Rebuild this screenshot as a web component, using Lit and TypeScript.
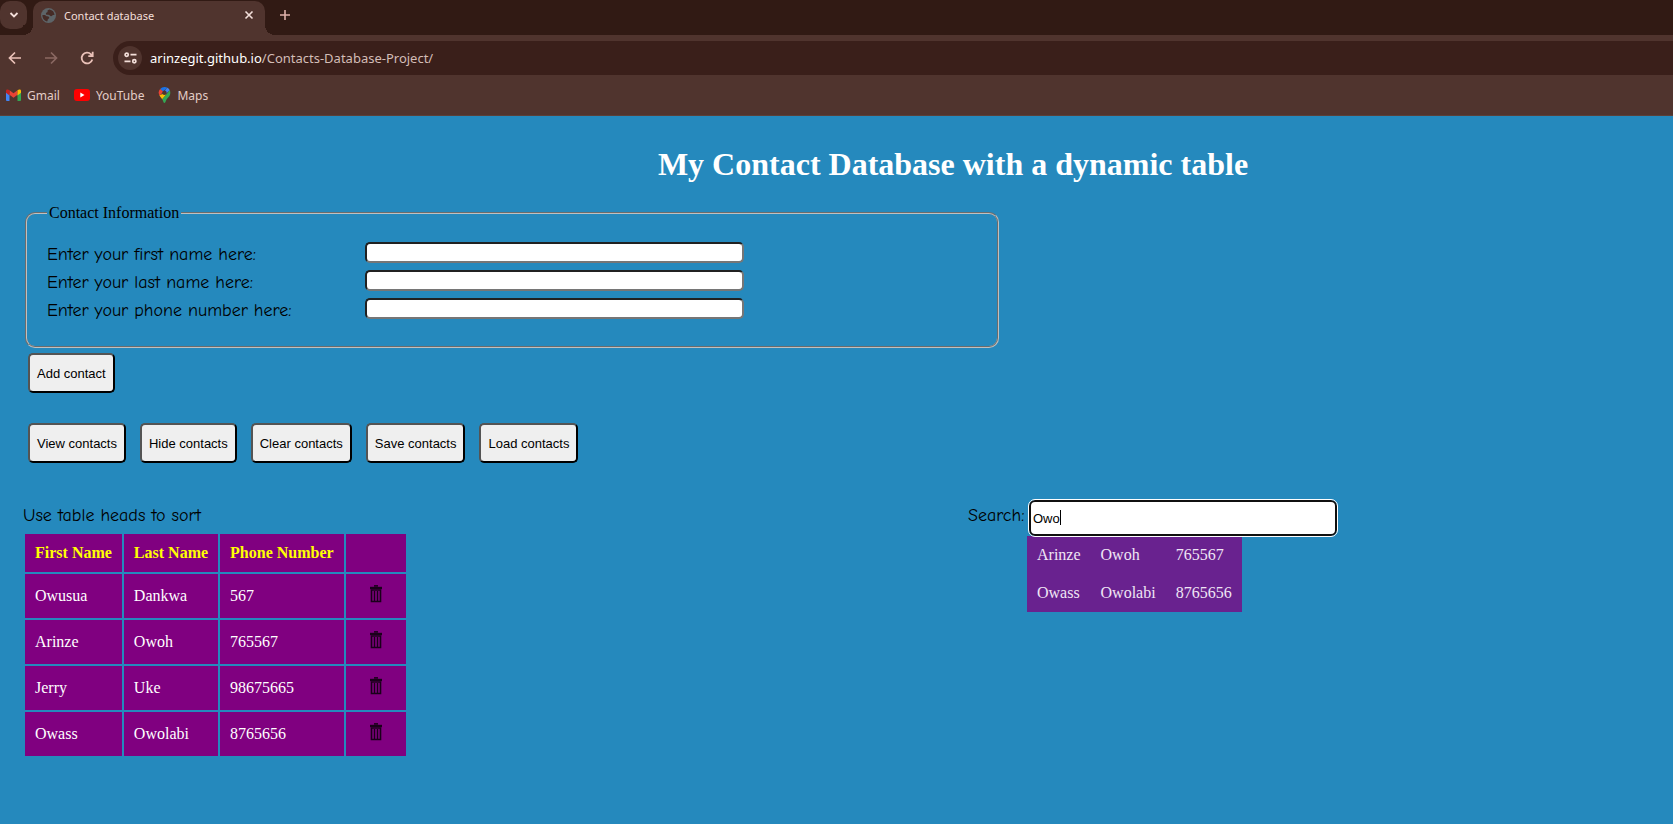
import { LitElement, html, css, svg } from "lit";
import { customElement, state } from "lit/decorators.js";

interface Contact {
  first: string;
  last: string;
  phone: string;
}

@customElement("browser-chrome")
export class BrowserChrome extends LitElement {
  static styles = css`
    :host {
      display: block;
      background: #50342e;
      color: #f3dfda;
      font-family: "Segoe UI", "Noto Sans", "Open Sans", sans-serif;
      font-size: 12px;
      border-bottom: 1px solid #5b4039;
    }
    button {
      border: 0;
      padding: 0;
      background: none;
      color: inherit;
      display: flex;
      align-items: center;
      justify-content: center;
    }
    svg {
      display: block;
      flex: none;
    }
    .strip {
      display: flex;
      height: 35px;
      background: #311a14;
    }
    .tab-search {
      width: 27px;
      height: 28px;
      margin-top: 1px;
      background: #50342e;
      border-radius: 10px;
    }
    .tab {
      position: relative;
      display: flex;
      align-items: center;
      gap: 8px;
      box-sizing: border-box;
      width: 232px;
      margin: 1px 0 0 6px;
      padding: 0 8px 6px 8px;
      background: #50342e;
      border-radius: 10px 10px 0 0;
    }
    .tab::before,
    .tab::after {
      content: "";
      position: absolute;
      bottom: 0;
      width: 10px;
      height: 10px;
    }
    .tab::before {
      left: -10px;
      background: radial-gradient(circle at 0 0, #311a14 10px, #50342e 10px);
    }
    .tab::after {
      right: -10px;
      background: radial-gradient(circle at 100% 0, #311a14 10px, #50342e 10px);
    }
    .tab-title {
      flex: 1;
      font-size: 11px;
      white-space: nowrap;
    }
    .new-tab {
      width: 28px;
      height: 28px;
      margin: 1px 0 0 6px;
      color: #dfb0a8;
    }
    .toolbar {
      display: flex;
      align-items: center;
      padding: 6px 0 6px 1px;
      color: #eac1b8;
    }
    .nav {
      width: 28px;
      height: 28px;
      margin-right: 8px;
    }
    .nav.off {
      color: #8a6862;
    }
    .omnibox {
      flex: 1;
      display: flex;
      align-items: center;
      gap: 8px;
      height: 34px;
      margin-left: 4px;
      padding-left: 5px;
      background: #3a1f1a;
      border-radius: 17px 0 0 17px;
    }
    .site {
      width: 24px;
      height: 24px;
      border-radius: 12px;
      background: #50342e;
      color: #f3dfda;
    }
    .url {
      font-size: 13px;
      line-height: 20px;
      color: #d3bdb7;
    }
    .host {
      color: #fff;
    }
    .bookmarks {
      display: flex;
      gap: 14px;
      padding: 6px;
      height: 28px;
      box-sizing: border-box;
      align-items: center;
      margin-bottom: 6px;
    }
    .bookmarks a {
      display: flex;
      align-items: center;
      gap: 6px;
      color: #e3cdc7;
      text-decoration: none;
    }
  `;

  render() {
    return html`
      <div class="strip">
        <button class="tab-search" aria-label="Search tabs">
          <svg width="10" height="8" viewBox="0 0 10 8" fill="none" stroke="currentColor" stroke-width="1.800">
            <path d="M1.500 2l3.500 3.500L8.500 2" />
          </svg>
        </button>
        <div class="tab">
          <svg width="15" height="15" viewBox="0 0 16 16">
            <circle cx="8" cy="8" r="8" fill="#5d6468" />
            <path d="M9 1.500c-2 .5-2.600 1.500-1.800 2.600-.6.8-2 .7-2 1.900 0 1 .8 1.300 2.600 1.300 1.500 0 1.700 1.600 3 1.600 1 0 1-1.400 2.200-1.400h1.400A6.600 6.600 0 0 0 9 1.500zM1.500 7.500a6.800 6.800 0 0 0 4.800 6.800c.9-.3.7-1.500 1-2.400.5-.6 1.700-.8 1.500-1.900-.3-1.100-1.800-1-2.800-1.200-1-.3-.8-1.300-2.200-1.300z" fill="#452b26" />
          </svg>
          <span class="tab-title">Contact database</span>
          <button aria-label="Close tab">
            <svg width="16" height="16" viewBox="0 0 16 16" fill="none" stroke="currentColor" stroke-width="1.600">
              <path d="M4.500 4.500l7 7M11.500 4.500l-7 7" />
            </svg>
          </button>
        </div>
        <button class="new-tab" aria-label="New tab">
          <svg width="12" height="12" viewBox="0 0 12 12" fill="none" stroke="currentColor" stroke-width="1.600">
            <path d="M6 1v10M1 6h10" />
          </svg>
        </button>
      </div>
      <div class="toolbar">
        <button class="nav" aria-label="Back">
          <svg width="14" height="14" viewBox="0 0 14 14" fill="none" stroke="currentColor" stroke-width="1.700">
            <path d="M13 7H2M7 1.500L1.500 7 7 12.500" />
          </svg>
        </button>
        <button class="nav off" aria-label="Forward">
          <svg width="14" height="14" viewBox="0 0 14 14" fill="none" stroke="currentColor" stroke-width="1.700">
            <path d="M1 7h11M7 1.500L12.500 7 7 12.500" />
          </svg>
        </button>
        <button class="nav" aria-label="Reload">
          <svg width="14" height="14" viewBox="0 0 14 14" fill="none" stroke="currentColor" stroke-width="1.800">
            <path d="M12.300 8.500A5.400 5.400 0 1 1 11 3.300L12.600 5M12.700 0.800V5.200H8.300" />
          </svg>
        </button>
        <div class="omnibox">
          <button class="site" aria-label="View site information">
            <svg width="13" height="12" viewBox="0 0 13 12" fill="none" stroke="currentColor" stroke-width="1.700">
              <circle cx="2.700" cy="2.700" r="1.600" />
              <path d="M6.500 2.700H12.500M.5 9.300H6.500" />
              <circle cx="10.300" cy="9.300" r="1.600" />
            </svg>
          </button>
          <span class="url"><span class="host">arinzegit.github.io</span>/Contacts-Database-Project/</span>
        </div>
      </div>
      <nav class="bookmarks">
        <a href="#gmail">
          <svg width="15" height="12" viewBox="0 0 15 12">
            <path d="M0 2v9a1 1 0 0 0 1 1h2.500V4.500z" fill="#4285f4" />
            <path d="M15 2v9a1 1 0 0 1-1 1h-2.500V4.500z" fill="#34a853" />
            <path d="M3.500 1.200v4.500l4 3 4-3V1.200l-4 3z" fill="#ea4335" />
            <path d="M0 1.800v2l3.500 2.600V1.200C2 0 0 .3 0 1.800z" fill="#c5221f" />
            <path d="M15 1.800v2l-3.500 2.600V1.200C13 0 15 .3 15 1.800z" fill="#fbbc04" />
          </svg>
          Gmail
        </a>
        <a href="#youtube">
          <svg width="16" height="12" viewBox="0 0 16 12">
            <rect width="16" height="12" rx="3" fill="#f00" />
            <path d="M6.300 3.500v5l4.200-2.500z" fill="#fff" />
          </svg>
          YouTube
        </a>
        <a href="#maps">
          <svg width="13" height="16" viewBox="0 0 13 16">
            <path d="M6.500 0a5.800 5.800 0 0 0-4.400 2l3 2.600L9.500.8A6 6 0 0 0 6.500 0z" fill="#1a73e8" />
            <path d="M2.100 2A5.800 5.800 0 0 0 1.500 8.500L5.500 4.700z" fill="#ea4335" />
            <path d="M9.300.7L4.500 6.500l2 1.800 5.300-5.100A5.800 5.800 0 0 0 9.300.7z" fill="#4285f4" />
            <path d="M4.700 7l-3.300 1.300C2 9.800 3.300 11 4.200 12.300l4.300-5z" fill="#fbbc04" />
            <path d="M11.800 3.200L4.200 12.200c1.100 1.500 1.200 3.800 2.300 3.800s1.200-2.400 2.300-3.900c1.500-2 3.500-3.200 3.500-6.200 0-1-.1-1.900-.5-2.700z" fill="#34a853" />
            <circle cx="6.500" cy="5.700" r="2.200" fill="#50342e" />
          </svg>
          Maps
        </a>
      </nav>
    `;
  }
}

@customElement("contact-page")
export class ContactPage extends LitElement {
  @state() private contacts: Contact[] = [
    { first: "Owusua", last: "Dankwa", phone: "567" },
    { first: "Arinze", last: "Owoh", phone: "765567" },
    { first: "Jerry", last: "Uke", phone: "98675665" },
    { first: "Owass", last: "Owolabi", phone: "8765656" },
  ];

  @state() private query = "Owo";

  static styles = css`
    :host {
      display: block;
      padding: 29px 0 0 23px;
      font-family: "Liberation Serif", "Times New Roman", serif;
      font-size: 16px;
      line-height: 18px;
      color: #000;
    }
    h1 {
      margin: 0;
      padding-left: 210px;
      font-size: 32px;
      line-height: 38px;
      text-align: center;
      color: #fff;
    }
    .hand {
      font-family: "Comic Sans MS", "Comic Neue", "Noto Sans", sans-serif;
      font-size: 18px;
      line-height: 22px;
    }
    fieldset {
      margin: 21px 0 0 2px;
      padding: 16px 20px 24px;
      width: 59%;
      box-sizing: border-box;
      border: 2px groove #c0c0c0;
      border-radius: 10px;
    }
    legend {
      padding: 0 2px;
    }
    .field {
      display: grid;
      grid-template-columns: 318px 379px;
      align-items: center;
      height: 28px;
    }
    .field label {
      align-self: end;
    }
    input {
      box-sizing: border-box;
      font: 13px/15px "Liberation Sans", Arial, sans-serif;
      background: #fff;
      color: #000;
    }
    .field input {
      height: 21px;
      border: 2px inset #767676;
      border-radius: 5px;
    }
    .actions {
      display: flex;
      gap: 14px;
      margin: 5px 0 0 5px;
    }
    .actions + .actions {
      margin-top: 30px;
    }
    .actions button {
      height: 40px;
      padding: 0 7px;
      font: 13px/15px "Liberation Sans", Arial, sans-serif;
      color: #000;
      background: #efefef;
      border: 2px outset #000;
      border-radius: 5px;
    }
    .columns {
      display: grid;
      grid-template-columns: 4fr 3fr;
      column-gap: 5px;
      margin-top: 36px;
    }
    .hint {
      margin: 6px 0 5px;
    }
    .contacts {
      border-spacing: 2px;
      color: #fff;
    }
    th,
    td {
      padding: 10px;
      text-align: left;
    }
    .contacts th,
    .contacts td {
      background: #800080;
    }
    .contacts th {
      color: #ff0;
    }
    .contacts td {
      height: 24px;
    }
    .contacts .tool {
      width: 40px;
    }
    .remove {
      display: block;
      margin: 0 auto;
      padding: 0 0 5px;
      border: 0;
      background: none;
    }
    .remove svg {
      display: block;
    }
    .search {
      display: flex;
      align-items: center;
      gap: 4px;
      margin-top: 1px;
    }
    .search label {
      width: 57px;
      padding-bottom: 4px;
    }
    .box {
      position: relative;
      width: 308px;
    }
    .box input {
      width: 100%;
      height: 36px;
      padding: 0 2px;
      border: 2px solid #101010;
      border-radius: 6px;
      outline: 1px solid #fff;
      display: block;
    }
    .caret {
      position: absolute;
      left: 31px;
      top: 10px;
      width: 1px;
      height: 15px;
      background: #000;
    }
    .results {
      margin-left: 59px;
      border-collapse: collapse;
      background: #69228f;
      color: #f0e6f5;
    }
  `;

  private trash() {
    return svg`
      <svg width="12" height="18" viewBox="0 0 12 18" fill="none" stroke="#1a001a">
        <path d="M4 .9h4" stroke-width="1.600" />
        <path d="M0 3h12" stroke-width="2.400" />
        <path d="M1.500 5v11.500h9V5z" stroke-width="1.600" />
        <path d="M4.500 6v10M7.500 6v10" stroke-width="1.400" />
      </svg>`;
  }

  private remove(contact: Contact) {
    this.contacts = this.contacts.filter((c) => c !== contact);
  }

  private sortBy(key: keyof Contact) {
    this.contacts = [...this.contacts].sort((a, b) => a[key].localeCompare(b[key]));
  }

  render() {
    const q = this.query.toLowerCase();
    const found = this.contacts.filter((c) => q && c.last.toLowerCase().startsWith(q));
    return html`
      <h1>My Contact Database with a dynamic table</h1>
      <fieldset>
        <legend>Contact Information</legend>
        <div class="field">
          <label class="hand" for="first">Enter your first name here:</label><input id="first" type="text" />
        </div>
        <div class="field">
          <label class="hand" for="last">Enter your last name here:</label><input id="last" type="text" />
        </div>
        <div class="field">
          <label class="hand" for="phone">Enter your phone number here:</label><input id="phone" type="tel" />
        </div>
      </fieldset>
      <div class="actions"><button>Add contact</button></div>
      <div class="actions">
        <button>View contacts</button>
        <button>Hide contacts</button>
        <button>Clear contacts</button>
        <button>Save contacts</button>
        <button>Load contacts</button>
      </div>
      <div class="columns">
        <div>
          <p class="hint hand">Use table heads to sort</p>
          <table class="contacts">
            <thead>
              <tr>
                <th @click=${() => this.sortBy("first")}>First Name</th>
                <th @click=${() => this.sortBy("last")}>Last Name</th>
                <th @click=${() => this.sortBy("phone")}>Phone Number</th>
                <th class="tool"></th>
              </tr>
            </thead>
            <tbody>
              ${this.contacts.map(
                (c) => html`<tr>
                  <td>${c.first}</td>
                  <td>${c.last}</td>
                  <td>${c.phone}</td>
                  <td class="tool">
                    <button class="remove" aria-label="Delete contact" @click=${() => this.remove(c)}>${this.trash()}</button>
                  </td>
                </tr>`
              )}
            </tbody>
          </table>
        </div>
        <div>
          <div class="search">
            <label class="hand" for="search">Search:</label>
            <div class="box">
              <input
                id="search"
                type="text"
                .value=${this.query}
                @input=${(e: InputEvent) => (this.query = (e.target as HTMLInputElement).value)}
              />
              <span class="caret"></span>
            </div>
          </div>
          <table class="results">
            <tbody>
              ${found.map((c) => html`<tr><td>${c.first}</td><td>${c.last}</td><td>${c.phone}</td></tr>`)}
            </tbody>
          </table>
        </div>
      </div>
    `;
  }
}

@customElement("app-root")
export class AppRoot extends LitElement {
  static styles = css`
    :host {
      display: block;
      min-height: 100vh;
      background: #2589bd;
    }
  `;

  render() {
    return html`<browser-chrome></browser-chrome><contact-page></contact-page>`;
  }
}
